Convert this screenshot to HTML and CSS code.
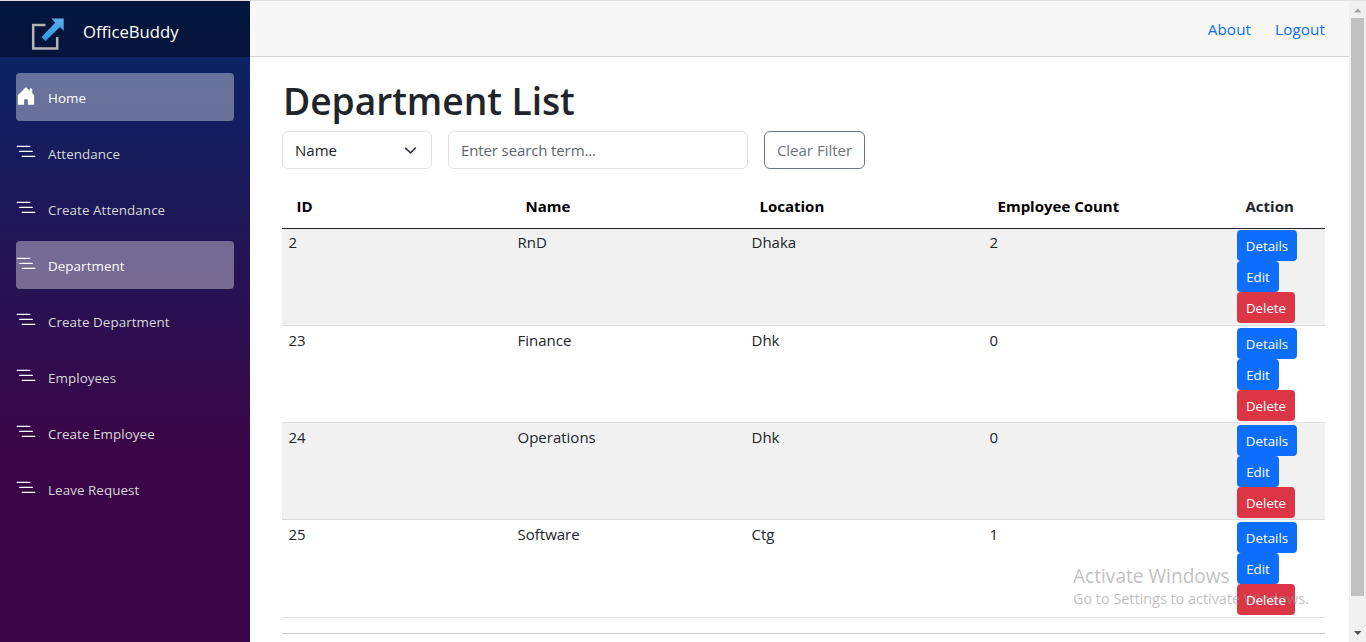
FILE: index.html
```html
<!DOCTYPE html>
<html lang="en">
<head>
<meta charset="utf-8">
<title>Department List</title>
<link rel="stylesheet" href="styles.css">
</head>
<body>
<svg class="defs" width="0" height="0" aria-hidden="true">
  <symbol id="list" viewBox="0 0 16 16"><path d="M4.5 11.5A.5.5 0 0 1 5 11h10a.5.5 0 0 1 0 1H5a.5.5 0 0 1-.5-.5zm-2-4A.5.5 0 0 1 3 7h10a.5.5 0 0 1 0 1H3a.5.5 0 0 1-.5-.5zm-2-4A.5.5 0 0 1 1 3h10a.5.5 0 0 1 0 1H1a.5.5 0 0 1-.5-.5z"/></symbol>
  <symbol id="house" viewBox="0 0 16 16"><path d="M6.5 14.5v-3.505c0-.245.25-.495.5-.495h2c.25 0 .5.25.5.5v3.5a.5.5 0 0 0 .5.5h4a.5.5 0 0 0 .5-.5v-7a.5.5 0 0 0-.146-.354L13 5.793V2.5a.5.5 0 0 0-.5-.5h-1a.5.5 0 0 0-.5.5v1.293L8.354 1.146a.5.5 0 0 0-.708 0l-6 6A.5.5 0 0 0 1.5 7.5v7a.5.5 0 0 0 .5.5h4a.5.5 0 0 0 .5-.5Z"/></symbol>
</svg>
<div class="page">
  <aside class="sidebar">
    <div class="brand">
      <svg class="logo" viewBox="0 0 36 36" width="36" height="36">
        <defs><linearGradient id="blue" x1="0" y1="0" x2="0" y2="1"><stop offset="0" stop-color="#5aaeee"/><stop offset="1" stop-color="#2f97e2"/></linearGradient></defs>
        <path d="M15.500 9H3.200v23.500h24V21" fill="none" stroke="#b3b3b3" stroke-width="2.500"/>
        <path d="M21.500 2.500h12.200v12.200l-3.700-3.700L15.500 25l-4-4L25.200 6.800z" fill="url(#blue)"/>
      </svg>
      <span class="brand-name">OfficeBuddy</span>
    </div>
    <nav class="nav">
      <a class="item active"><svg class="icon"><use href="#house"/></svg><span>Home</span></a>
      <a class="item"><svg class="icon"><use href="#list"/></svg><span>Attendance</span></a>
      <a class="item"><svg class="icon"><use href="#list"/></svg><span>Create Attendance</span></a>
      <a class="item active"><svg class="icon"><use href="#list"/></svg><span>Department</span></a>
      <a class="item"><svg class="icon"><use href="#list"/></svg><span>Create Department</span></a>
      <a class="item"><svg class="icon"><use href="#list"/></svg><span>Employees</span></a>
      <a class="item"><svg class="icon"><use href="#list"/></svg><span>Create Employee</span></a>
      <a class="item"><svg class="icon"><use href="#list"/></svg><span>Leave Request</span></a>
    </nav>
  </aside>
  <main class="main">
    <header class="topbar"><a>About</a><a>Logout</a></header>
    <section class="content">
      <h1>Department List</h1>
      <div class="filters">
        <div class="select"><span>Name</span><svg viewBox="0 0 16 16" width="13" height="13"><path d="m2 5 6 6 6-6" fill="none" stroke="#343a40" stroke-width="2" stroke-linecap="round" stroke-linejoin="round"/></svg></div>
        <div class="input">Enter search term...</div>
        <div class="clear">Clear Filter</div>
      </div>
      <div class="table">
        <div class="row head"><b>ID</b><b>Name</b><b>Location</b><b>Employee Count</b><b class="action">Action</b></div>
        <div class="row first odd"><span>2</span><span>RnD</span><span>Dhaka</span><span>2</span><div class="buttons"><a class="btn details">Details</a><a class="btn edit">Edit</a><a class="btn delete">Delete</a></div></div>
        <div class="row"><span>23</span><span>Finance</span><span>Dhk</span><span>0</span><div class="buttons"><a class="btn details">Details</a><a class="btn edit">Edit</a><a class="btn delete">Delete</a></div></div>
        <div class="row odd"><span>24</span><span>Operations</span><span>Dhk</span><span>0</span><div class="buttons"><a class="btn details">Details</a><a class="btn edit">Edit</a><a class="btn delete">Delete</a></div></div>
        <div class="row last"><span>25</span><span>Software</span><span>Ctg</span><span>1</span><div class="buttons"><a class="btn details">Details</a><a class="btn edit">Edit</a><a class="btn delete"><span class="label">Delete</span></a></div></div>
      </div>
      <div class="rule"></div>
    </section>
  </main>
  <div class="scrollbar">
    <svg width="17" height="17"><path d="M5 11.500h7.500L8.750 7.500z" fill="#a3a3a3"/></svg>
    <div class="thumb"></div>
    <svg width="17" height="17"><path d="M5 6h7.500L8.750 10z" fill="#505050"/></svg>
  </div>
</div>
<div class="watermark"><div class="wm-title">Activate Windows</div><div class="wm-text">Go to Settings to activate Windows.</div></div>
</body>
</html>
```
FILE: styles.css
```css
* { box-sizing: border-box; }
body { margin: 0; height: 642px; overflow: hidden; background: #fff; color: #212529; font: 15.2px/24px "Open Sans", "Noto Sans", sans-serif; }
.defs { position: absolute; }
.page { display: flex; height: 642px; border-top: 1px solid #dfdfdf; }
.sidebar { width: 250px; flex: none; background: linear-gradient(180deg, rgb(5, 39, 103) 0%, #3a0647 70%); }
.brand { height: 56px; padding: 15px 0 0 30px; display: flex; background: rgba(0, 0, 0, .4); color: #fff; }
.brand-name { margin-left: 17px; font-size: 16.7px; line-height: 32px; white-space: nowrap; }
.logo { flex: none; }
.nav { padding: 16px; display: flex; flex-direction: column; gap: 8px; }
.item { height: 48px; border-radius: 4px; display: flex; color: #d7d7d7; font-size: 13.4px; letter-spacing: .06px; line-height: 50px; }
.item.active { background: rgba(255, 255, 255, .37); color: #fff; }
.icon { width: 20px; height: 20px; margin: 13px 12px 0 0; fill: #fff; flex: none; }
.main { flex: 1; min-width: 0; }
.topbar { height: 56px; background: #f7f7f7; border-bottom: 1px solid #d6d5d5; display: flex; justify-content: flex-end; gap: 24px; padding: 16px 24px 0 0; color: #0d6efd; letter-spacing: .12px; }
.content { padding: 20px 24px 0 32px; }
h1 { margin: 0; height: 54px; padding-left: 1px; font-size: 37.2px; font-weight: 600; letter-spacing: -.05px; line-height: 47px; white-space: nowrap; }
.filters { display: flex; gap: 16px; height: 38px; line-height: 36px; font-size: 15px; }
.select, .input { border: 1px solid #dee2e6; border-radius: 6px; padding: 0 12px; }
.select { width: 150px; padding-right: 14px; display: flex; justify-content: space-between; align-items: center; }
.input { width: 300px; color: #60666c; letter-spacing: -.12px; }
.clear { width: 101px; border: 1px solid #6c757d; border-radius: 6px; color: #6c757d; text-align: center; white-space: nowrap; }
.table { margin-top: 17px; font-size: 15px; }
.row { display: grid; grid-template-columns: 229px 234px 238px 247px 95px; height: 97px; padding-top: 2px; border-bottom: 1px solid #dee2e6; }
.row > * { padding-left: 6.5px; }
.row > .buttons { padding-left: 7px; }
.row.first { padding-top: 1px; }
.row.odd { background: #f1f1f1; border-color: #dcdddd; }
.row.last { height: 98px; }
.row.head { height: 43px; padding-top: 8px; border-color: #212529; }
.row.head b { padding-left: 14.5px; font-size: 15px; font-weight: 700; color: #000; }
.row.head .action { padding-left: 15.5px; color: #212529; }
.buttons { display: flex; flex-direction: column; align-items: flex-start; }
.btn { height: 31px; border-radius: 4px; background: #0d6efd; color: #fff; font-size: 13.3px; line-height: 32px; text-align: center; }
.details { width: 60px; }
.edit { width: 42px; }
.delete { width: 58px; background: #dc3545; }
.label { position: relative; z-index: 2; }
.rule { margin-top: 15px; border-top: 1px solid #c8c8c8; }
.scrollbar { width: 17px; flex: none; background: #f1f1f1; display: flex; flex-direction: column; }
.scrollbar svg { flex: none; }
.thumb { width: 13px; height: 578px; margin-left: 2px; background: #c1c1c1; }
.scrollbar svg:last-child { margin-top: auto; }
.watermark { position: absolute; z-index: 1; left: 1073px; top: 563px; color: rgba(150, 150, 150, .6); white-space: nowrap; }
.wm-title { font-size: 19.1px; line-height: 26px; }
.wm-text { font-size: 14.4px; line-height: 20px; }
```
